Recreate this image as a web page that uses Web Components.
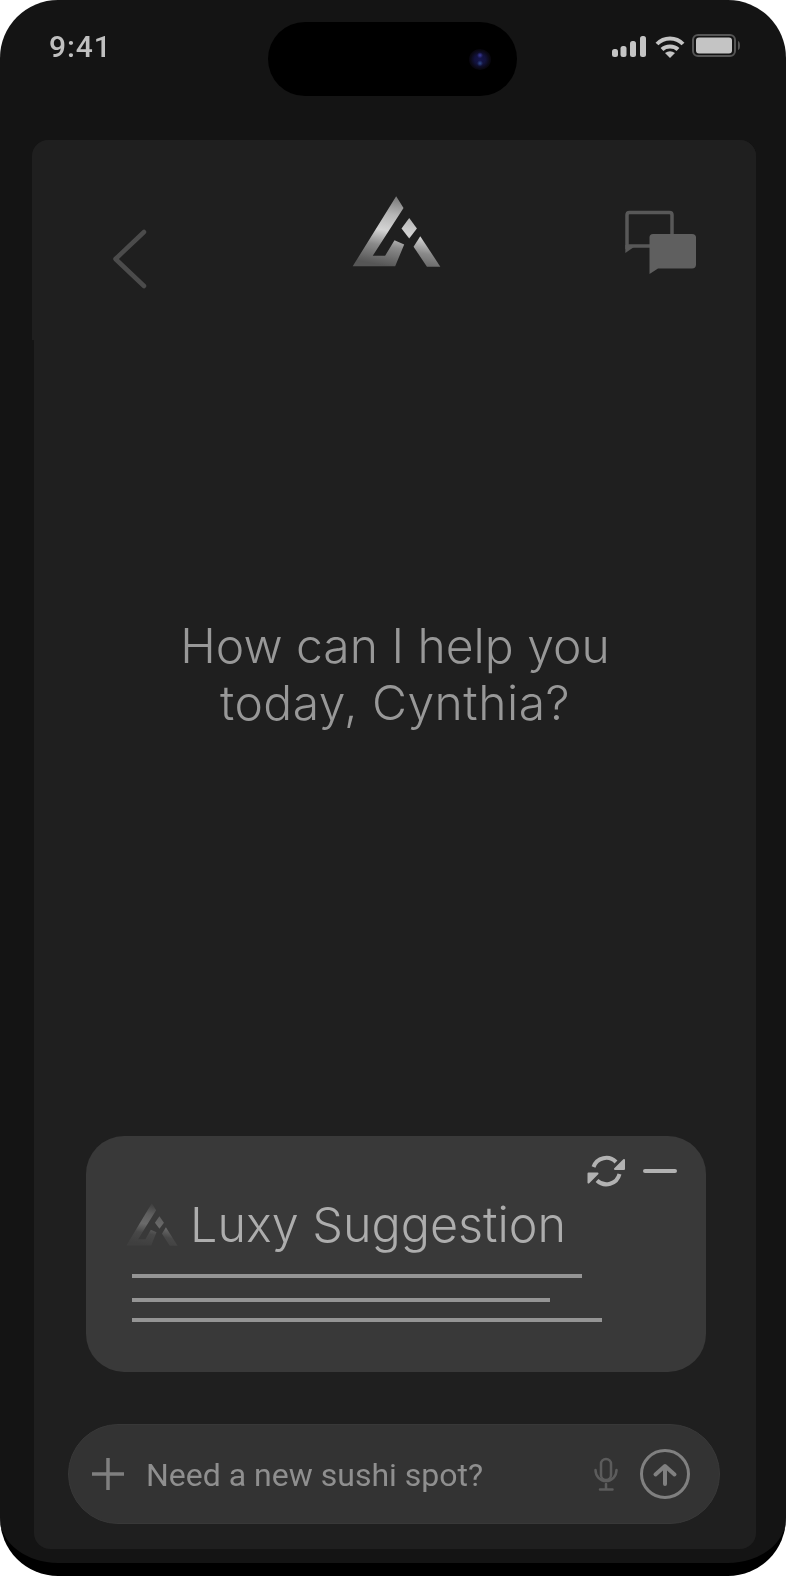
<!DOCTYPE html>
<html lang="en">
<head>
<meta charset="utf-8">
<title>Luxy</title>
<style>
  html, body { margin: 0; background: #fff; }
</style>
</head>
<body>
<phone-frame>
  <status-bar slot="status"></status-bar>
  <top-nav></top-nav>
  <greeting-text>How can I help you<br><span style="letter-spacing:.5px">today, Cynthia?</span></greeting-text>
  <suggestion-card>Luxy Suggestion</suggestion-card>
  <chat-input>Need a new sushi spot?</chat-input>
</phone-frame>

<script>
// outer device shell, panel is the lighter area under the status bar
class PhoneFrame extends HTMLElement {
  connectedCallback() {
    const shadow = this.attachShadow({ mode: "open" });
    shadow.innerHTML = `
    <style>
      :host {
        display: flex;
        flex-direction: column;
        box-sizing: border-box;
        width: 786px;
        height: 1576px;
        background: #141414;
        border-bottom: 13px solid #000;
        border-radius: 58px;
        overflow: hidden;
        will-change: transform;
      }
      .panel {
        display: flex;
        flex-direction: column;
        height: 1409px;
        margin: 0 30px 0 34px;
        background: #1f1f1f;
        border-radius: 16px;
      }
    </style>
    <slot name="status"></slot>
    <div class="panel"><slot></slot></div>
    `;
  }
}
customElements.define("phone-frame", PhoneFrame);

class StatusBar extends HTMLElement {
  connectedCallback() {
    const shadow = this.attachShadow({ mode: "open" });
    shadow.innerHTML = `
    <style>
      :host {
        display: flex;
        justify-content: space-between;
        box-sizing: border-box;
        position: relative;
        height: 140px;
        padding: 30px 46px 0 49px;
      }
      .time {
        font: 500 30px/34px Roboto, sans-serif;
        color: #c0c0c0;
        letter-spacing: 0.9px;
      }
      .icons { display: flex; height: 30px; margin-top: 3px; }
      .island {
        position: absolute;
        left: 268px;
        top: 22px;
        width: 249px;
        height: 74px;
        border-radius: 37px;
        background: #000;
      }
      .camera {
        position: absolute;
        left: 201px;
        top: 27px;
        width: 22px;
        height: 21px;
        border-radius: 50%;
        background:
          radial-gradient(circle at 50% 30%, #3a3a9a 0, rgba(40,40,120,0) 3px),
          radial-gradient(circle at 50% 68%, #2f4a8a 0, rgba(40,40,120,0) 3px),
          radial-gradient(ellipse at 50% 50%, #15154e 0, #12123c 35%, #0a0812 62%, #000 100%);
      }
    </style>
    <div class="time">9:41</div>
    <div class="icons">
      <svg width="134" height="30" viewBox="606 33 134 30">
        <g fill="#c4c4c4">
          <rect x="612" y="49" width="6" height="8" rx="2.500"/>
          <rect x="620.500" y="46" width="6" height="11" rx="2.500"/>
          <rect x="630" y="41" width="6" height="16" rx="2.500"/>
          <rect x="640" y="36" width="6" height="21" rx="2.500"/>
        </g>
        <g fill="none" stroke="#c4c4c4" stroke-width="4">
          <path d="M657 44 C 664 36.500, 676 36.500, 683 44"/>
          <path d="M662 49.500 C 666 45.500, 674 45.500, 678 49.500"/>
        </g>
        <path d="M665 53 Q670 49.500 675 53 L670 58 Z" fill="#c4c4c4"/>
        <rect x="693" y="35" width="42" height="21" rx="5" fill="none" stroke="#555" stroke-width="2"/>
        <rect x="696" y="37.500" width="36" height="16" rx="3" fill="#c4c4c4"/>
        <path d="M738 41 q2 .5 2 4.500 t-2 4.500 z" fill="#555"/>
      </svg>
    </div>
    <div class="island"><div class="camera"></div></div>
    `;
  }
}
customElements.define("status-bar", StatusBar);

// mountain logo, used in the nav and on the suggestion card
class LuxyLogo extends HTMLElement {
  connectedCallback() {
    const shadow = this.attachShadow({ mode: "open" });
    const width = this.getAttribute("width") || 88;
    const height = this.getAttribute("height") || 71;
    const id = this.getAttribute("tone") || "bright";
    const stops = id === "dim"
      ? ["#3e3e3e", "#5e5e5e", "#6a6a6a", "#484848", "#3f3f3f"]
      : ["#7a7a7a", "#b4b4b4", "#d4d4d4", "#8a8a8a", "#565656"];

    shadow.innerHTML = `
    <style>
      :host { display: block; flex: none; width: ${width}px; height: ${height}px; }
      svg { display: block; }
    </style>
    <svg width="${width}" height="${height}" viewBox="36 32 266 214" preserveAspectRatio="none">
      <defs>
        <linearGradient id="g" gradientUnits="userSpaceOnUse" x1="190" y1="40" x2="150" y2="245">
          <stop offset="0" stop-color="${stops[0]}"/>
          <stop offset="0.25" stop-color="${stops[1]}"/>
          <stop offset="0.5" stop-color="${stops[2]}"/>
          <stop offset="0.72" stop-color="${stops[3]}"/>
          <stop offset="1" stop-color="${stops[4]}"/>
        </linearGradient>
      </defs>
      <path fill="url(#g)" d="M168 33 L190 68 L98 212 L135 212 L163 165 L192 178 L165 244 L38 244 Z"/>
      <path fill="url(#g)" d="M207 98 L230 130 L207 160 L184 130 Z"/>
      <path fill="url(#g)" d="M240 153 L300 245 L260 245 L220 185 Z"/>
    </svg>
    `;
  }
}
customElements.define("luxy-logo", LuxyLogo);

class TopNav extends HTMLElement {
  connectedCallback() {
    const shadow = this.attachShadow({ mode: "open" });
    shadow.innerHTML = `
    <style>
      :host {
        display: flex;
        justify-content: space-between;
        box-sizing: border-box;
        height: 200px;
        margin-left: -2px;
        padding: 0 58px 0 78px;
        background: #1f1f1f;
        border-radius: 16px 16px 0 0;
      }
      svg { display: block; flex: none; }
      .back { margin-top: 88px; }
      luxy-logo { margin-top: 56px; margin-left: 21px; }
      .chat { margin-top: 70px; }
    </style>
    <svg class="back" width="38" height="62" viewBox="110 228 38 62">
      <path d="M144 232 L115.500 259 L144 286" fill="none" stroke="#4b4b4b" stroke-width="4.500" stroke-linecap="round" stroke-linejoin="round"/>
    </svg>
    <luxy-logo width="89" height="71"></luxy-logo>
    <svg class="chat" width="74" height="66" viewBox="624 209 74 66">
      <path d="M672 233 L672 214 Q672 211.500 669.500 211.500 L629.500 211.500 Q627 211.500 627 214 L627 248 M627 245 L650 245" fill="none" stroke="#585858" stroke-width="3.500"/>
      <path d="M625.300 244 L625.300 252 L634 246 Z" fill="#585858"/>
      <path d="M653 233 Q649.500 233 649.500 236.500 L649.500 273 L658 267.500 L692 267.500 Q696 267.500 696 263.500 L696 236.500 Q696 233 692 233 Z" fill="#5f5f5f"/>
    </svg>
    `;
  }
}
customElements.define("top-nav", TopNav);

class GreetingText extends HTMLElement {
  connectedCallback() {
    const shadow = this.attachShadow({ mode: "open" });
    shadow.innerHTML = `
    <style>
      :host {
        display: block;
        box-sizing: border-box;
        height: 796px;
        padding-top: 277px;
        text-align: center;
        font: 350 48px/57px Inter, sans-serif;
        color: #989898;
      }
    </style>
    <slot></slot>
    `;
  }
}
customElements.define("greeting-text", GreetingText);

class SuggestionCard extends HTMLElement {
  connectedCallback() {
    const shadow = this.attachShadow({ mode: "open" });
    shadow.innerHTML = `
    <style>
      :host {
        display: block;
        box-sizing: border-box;
        width: 620px;
        height: 236px;
        margin: 0 0 52px 52px;
        padding: 16px 29px 0 40px;
        background: #393939;
        border-radius: 38px;
      }
      .actions { display: flex; justify-content: flex-end; align-items: center; gap: 18px; height: 38px; }
      .dash { width: 34px; height: 4px; border-radius: 2px; background: #b2b2b2; }
      .title {
        display: flex;
        align-items: center;
        gap: 12px;
        margin-top: 7px;
        font: 350 48.500px/56px Inter, sans-serif;
        color: #adadad;
      }
      luxy-logo { margin-top: -2px; }
      .lines { display: flex; flex-direction: column; margin: 21px 0 0 6px; }
      .lines span { display: block; height: 4px; background: #959595; }
      .lines span:nth-child(2) { margin-top: 20px; }
      .lines span:nth-child(3) { margin-top: 16px; }
    </style>
    <div class="actions">
      <svg width="40" height="34" viewBox="585 1155 40 34">
        <g fill="none" stroke="#b2b2b2" stroke-width="4">
          <path d="M593.500 1168 A13.500 13.500 0 0 1 616 1163"/>
          <path d="M619.500 1175 A13.500 13.500 0 0 1 597 1181.500"/>
        </g>
        <path d="M624 1161 L624 1170 L615 1170 Z" fill="#b2b2b2" stroke="#b2b2b2" stroke-width="2" stroke-linejoin="round"/>
        <path d="M588.500 1174.500 L597.500 1174.500 L588.500 1183.500 Z" fill="#b2b2b2" stroke="#b2b2b2" stroke-width="2" stroke-linejoin="round"/>
      </svg>
      <div class="dash"></div>
    </div>
    <div class="title">
      <luxy-logo tone="dim" width="52" height="43"></luxy-logo>
      <span><slot></slot></span>
    </div>
    <div class="lines">
      <span style="width:450px"></span>
      <span style="width:418px"></span>
      <span style="width:470px"></span>
    </div>
    `;
  }
}
customElements.define("suggestion-card", SuggestionCard);

class ChatInput extends HTMLElement {
  connectedCallback() {
    const shadow = this.attachShadow({ mode: "open" });
    shadow.innerHTML = `
    <style>
      :host {
        display: flex;
        align-items: center;
        box-sizing: border-box;
        width: 652px;
        height: 100px;
        margin-left: 34px;
        padding: 0 28px 0 23px;
        background: #333;
        border: 1px solid #383838;
        border-radius: 50px;
      }
      svg { display: block; flex: none; }
      .text {
        flex: 1;
        margin-left: 22px;
        padding-top: 2px;
        font: 400 32px/36px Roboto, sans-serif;
        color: #8f8f8f;
      }
      .mic { margin-right: 19px; }
    </style>
    <svg width="32" height="32" viewBox="92 1458 32 32">
      <path d="M108 1458.500 V1490 M92.500 1474 H123.500" fill="none" stroke="#808080" stroke-width="3.500" stroke-linecap="round"/>
    </svg>
    <div class="text"><slot></slot></div>
    <svg class="mic" width="28" height="34" viewBox="592 1458 28 34">
      <g fill="none" stroke="#5c5c5c" stroke-width="2.500" stroke-linecap="round">
        <rect x="601" y="1460" width="10" height="21" rx="5"/>
        <path d="M595.500 1471 A10.500 11 0 0 0 616.500 1471"/>
        <path d="M606 1485 V1490 M600 1490.500 H612.500"/>
      </g>
    </svg>
    <svg width="52" height="52" viewBox="639 1447 52 52">
      <circle cx="665" cy="1473" r="23.500" fill="none" stroke="#808080" stroke-width="3"/>
      <path d="M665 1483 V1465.500 M655.500 1473.500 L665 1465 L674.500 1473.500" fill="none" stroke="#808080" stroke-width="4" stroke-linecap="round" stroke-linejoin="round"/>
    </svg>
    `;
  }
}
customElements.define("chat-input", ChatInput);
</script>
</body>
</html>
